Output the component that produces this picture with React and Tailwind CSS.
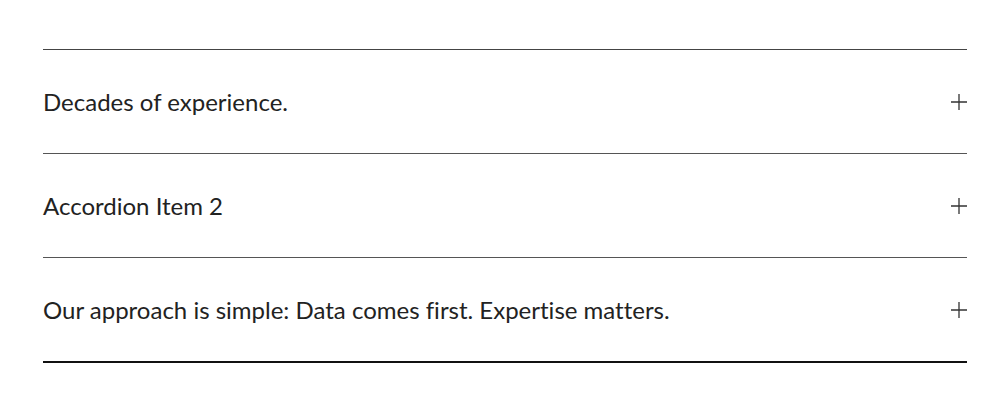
import React from "react";

const items = [
  "Decades of experience.",
  "Accordion Item 2",
  "Our approach is simple: Data comes first. Expertise matters.",
];

function Plus() {
  return (
    <svg width="16" height="16" viewBox="0 0 16 16" className="shrink-0">
      <path d="M0 8H16M8 0V16" stroke="#333" strokeWidth="1.3" fill="none" />
    </svg>
  );
}

export default function App() {
  return (
    <div className="w-[1000px] h-[404px] bg-white pt-[49px] pl-[43px] pr-[33px]" style={{ fontFamily: "Lato, 'Open Sans', sans-serif" }}>
      <div className="border-t border-[#444]">
        {items.map((t, i) => (
          <div
            key={i}
            className={
              "flex items-center justify-between h-[104px] " +
              (i === items.length - 1 ? "h-[105px] border-b-2 border-[#111]" : "border-b border-[#555]")
            }
          >
            <span className="text-[24px] font-normal text-[#222] leading-none [font-variant-ligatures:none]">{t}</span>
            <Plus />
          </div>
        ))}
      </div>
    </div>
  );
}
